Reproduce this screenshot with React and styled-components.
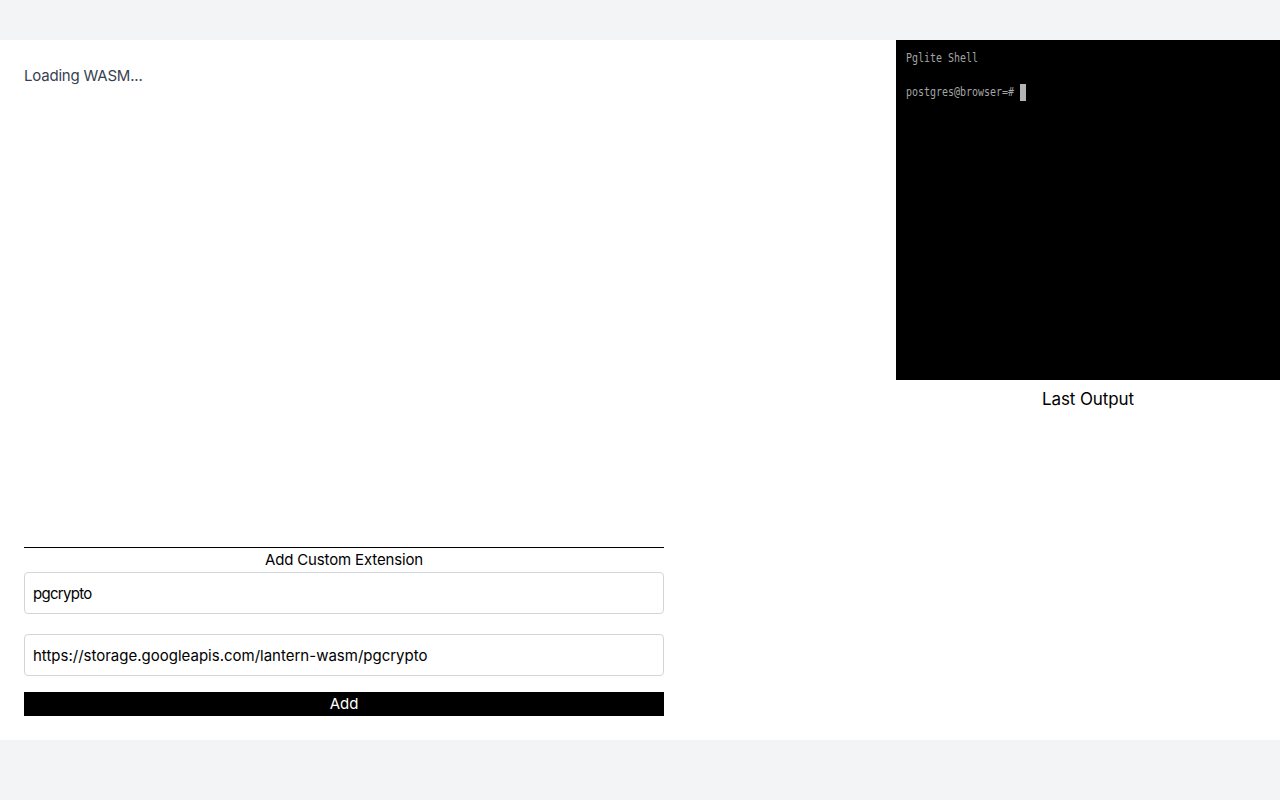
import React from 'react';
import styled, { createGlobalStyle } from 'styled-components';

const GlobalStyle = createGlobalStyle`
  html, body {
    margin: 0;
    padding: 0;
    background-color: #f3f4f6;
    font-family: Inter, sans-serif;
  }
  * {
    box-sizing: border-box;
  }
`;

const Page = styled.div`
  height: 800px;
  overflow: hidden;
  padding: 40px 0 60px;
`;

const Main = styled.main`
  height: 700px;
  background-color: #fff;
  display: flex;
  justify-content: space-between;
`;

const LeftColumn = styled.section`
  width: 688px;
  padding: 24px;
  display: flex;
  flex-direction: column;
  justify-content: space-between;
`;

const LoadingText = styled.div`
  font-size: 15px;
  line-height: 24px;
  letter-spacing: -0.2px;
  color: #374151;
`;

const ExtensionForm = styled.form`
  display: flex;
  flex-direction: column;
  border-top: 1px solid #000;
`;

const FormTitle = styled.div`
  font-size: 15px;
  line-height: 24px;
  letter-spacing: -0.15px;
  text-align: center;
  color: #000;
`;

const TextInput = styled.input`
  height: 42px;
  width: 100%;
  padding: 8px;
  margin-bottom: 20px;
  border: 1px solid #d1d5db;
  border-radius: 4px;
  background: #fff;
  color: #000;
  font-family: inherit;
  font-size: 15px;
  letter-spacing: ${(p) => p.$tracking || 0}px;
`;

const AddButton = styled.button`
  height: 24px;
  margin-top: -4px;
  border: none;
  padding: 0;
  background-color: #000;
  color: #fff;
  font-family: inherit;
  font-size: 15px;
  line-height: 24px;
`;

const RightColumn = styled.aside`
  width: 384px;
  display: flex;
  flex-direction: column;
`;

const Terminal = styled.div`
  height: 340px;
  padding: 10px;
  background-color: #000;
  color: #a4a4a4;
  font-family: "DejaVu Sans Mono", monospace;
  font-size: 12px;
  line-height: 17px;
  white-space: pre;
`;

const TerminalLine = styled.div`
  height: 17px;
`;

const TerminalText = styled.span`
  display: inline-block;
  width: ${(p) => p.$chars * 6}px;
  transform: scaleX(0.831);
  transform-origin: left center;
`;

const Cursor = styled.span`
  display: inline-block;
  width: 6px;
  height: 17px;
  margin-left: 6px;
  vertical-align: top;
  background-color: #b4b4b4;
`;

const OutputTitle = styled.div`
  font-size: 17px;
  line-height: 28px;
  letter-spacing: -0.1px;
  text-align: center;
  padding-top: 5px;
  color: #000;
`;

export default function App() {
  return (
    <Page>
      <GlobalStyle />
      <Main>
        <LeftColumn>
          <LoadingText>Loading WASM...</LoadingText>
          <ExtensionForm onSubmit={(e) => e.preventDefault()}>
            <FormTitle>Add Custom Extension</FormTitle>
            <TextInput $tracking={-0.7} defaultValue="pgcrypto" />
            <TextInput defaultValue="https://storage.googleapis.com/lantern-wasm/pgcrypto" />
            <AddButton type="submit">Add</AddButton>
          </ExtensionForm>
        </LeftColumn>
        <RightColumn>
          <Terminal>
            <TerminalLine><TerminalText $chars={12}>Pglite Shell</TerminalText></TerminalLine>
            <TerminalLine />
            <TerminalLine><TerminalText $chars={18}>postgres@browser=#</TerminalText><Cursor /></TerminalLine>
          </Terminal>
          <OutputTitle>Last Output</OutputTitle>
        </RightColumn>
      </Main>
    </Page>
  );
}
